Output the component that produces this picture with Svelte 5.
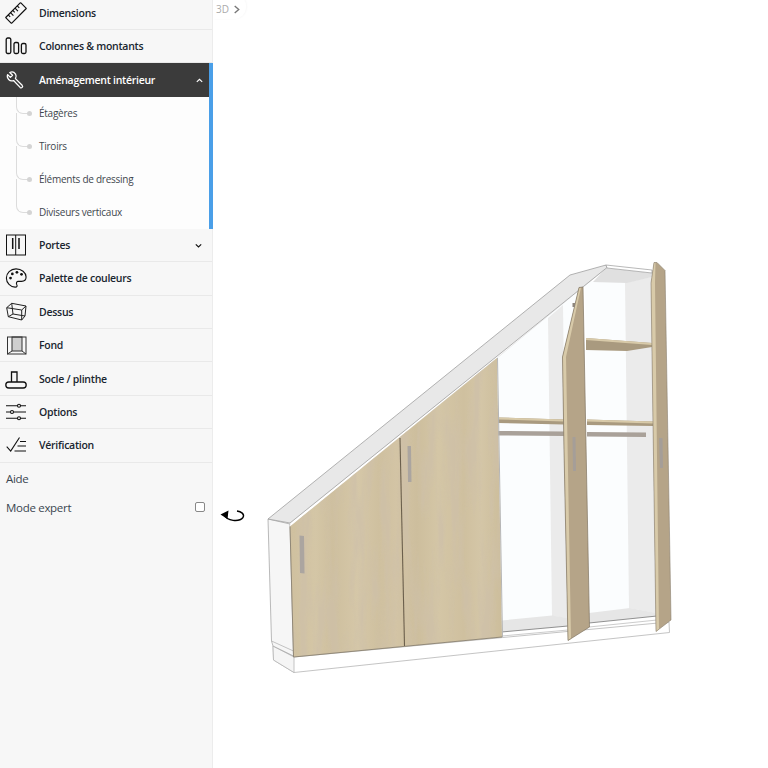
<script>
  const subs = ['Étagères', 'Tiroirs', 'Éléments de dressing', 'Diviseurs verticaux'];
</script>

<div class="page">
  <aside class="side">
    <div class="row">
      <svg class="ico" viewBox="0 0 24 24"><g transform="rotate(-45 12 12)" fill="none" stroke="#111" stroke-width="1.3"><rect x="0.5" y="7.5" width="23" height="9" rx=".5"/><path d="M4.500 7.500v3M8 7.500v4.500M11.500 7.500v3M15 7.500v4.500M18.500 7.500v3"/></g></svg>
      <span>Dimensions</span>
    </div>
    <div class="row">
      <svg class="ico" viewBox="0 0 22 22" fill="none" stroke="#111" stroke-width="1.300"><rect x="1.200" y="3" width="4.600" height="15.500" rx="1.500"/><rect x="9" y="7.500" width="4.600" height="11" rx="1.500"/><rect x="16.400" y="8.500" width="4.600" height="10" rx="1.500"/></svg>
      <span>Colonnes &amp; montants</span>
    </div>
    <div class="group">
      <div class="row active">
        <svg class="ico" viewBox="0 0 24 24" fill="none" stroke="#fff" stroke-width="1.400" stroke-linejoin="round"><path d="M11.500 5.500a5 5 0 0 0-6.300-1.700l3 3-2.300 2.300-3-3a5 5 0 0 0 6.400 6.500l7.200 7.500c1.500 1.400 3.700-.7 2.200-2.300l-7.300-7.300a4.800 4.800 0 0 0 .1-5z"/></svg>
        <span>Aménagement intérieur</span>
        <svg class="chev" viewBox="0 0 10 10"><path d="M2 6.500 5 3.700 8 6.500" fill="none" stroke="#fff" stroke-width="1.300"/></svg>
      </div>
      <ul class="subs">
        {#each subs as s}
          <li>{s}</li>
        {/each}
      </ul>
    </div>
    <div class="row">
      <svg class="ico" viewBox="0 0 22 22" fill="none" stroke="#111"><rect x="1.500" y="1" width="19" height="20" stroke-width="1"/><path d="M10.700 1v20" stroke-width="1"/><path d="M7.700 4v11M14 4v11" stroke-width="1.500"/></svg>
      <span>Portes</span>
      <svg class="chev" viewBox="0 0 10 10"><path d="M2 3.700 5 6.500 8 3.700" fill="none" stroke="#111" stroke-width="1.300"/></svg>
    </div>
    <div class="row">
      <svg class="ico" viewBox="0 0 24 24"><path d="M12 2C6 2 1.500 6.500 1.500 12c0 5.500 4.500 10 9.500 10 2.500 0 2.500-1.800 1.800-3-.8-1.500-.2-3.300 1.700-3.300h3.500c2.800 0 5-1.800 5-4.700C23 6 18 2 12 2z" fill="none" stroke="#111" stroke-width="1.200"/><g fill="#111"><circle cx="6" cy="12" r="1.500"/><circle cx="8" cy="7.500" r="1.500"/><circle cx="13" cy="5.800" r="1.500"/><circle cx="18" cy="8" r="1.500"/></g></svg>
      <span>Palette de couleurs</span>
    </div>
    <div class="row">
      <svg class="ico" viewBox="0 0 22 22" fill="none" stroke="#222" stroke-width="1" stroke-linejoin="round"><path d="M1.700 6.700 6.700 2.300 21 5 20 15 16.700 19 3.300 15.700Z"/><path d="M1.700 6.700 16.700 9 21 5M16.700 9V19M6.700 2.300 8 13 20 15M8 13 3.300 15.700"/></svg>
      <span>Dessus</span>
    </div>
    <div class="row">
      <svg class="ico" viewBox="0 0 22 22" fill="none" stroke="#333" stroke-width="1"><rect x="7" y="3" width="10" height="14" fill="#cfcfcf"/><rect x="2.500" y="3" width="18.500" height="17"/><path d="M2.500 20 7 17M21 20 17 17"/></svg>
      <span>Fond</span>
    </div>
    <div class="row">
      <svg class="ico" viewBox="0 0 22 22" fill="none" stroke="#111" stroke-width="1.300"><path d="M6.500 14V4h5.500v10M3.800 14a3 3 0 0 0 0 6h14.400a3 3 0 0 0 0-6z"/></svg>
      <span>Socle / plinthe</span>
    </div>
    <div class="row">
      <svg class="ico" viewBox="0 0 22 22" fill="none" stroke="#111" stroke-width="1.100"><path d="M1 4.700h11.500M15.500 4.700H21M1 11h4.500M8.500 11H21M1 17.300h11.500M15.500 17.300H21"/><circle cx="14" cy="4.700" r="1.500"/><circle cx="7" cy="11" r="1.500"/><circle cx="14" cy="17.300" r="1.500"/></svg>
      <span>Options</span>
    </div>
    <div class="row">
      <svg class="ico" viewBox="0 0 22 22" fill="none" stroke="#111" stroke-width="1.100"><path d="M1.700 12.700 5.700 17 14.500 3.500"/><path d="M15 7.500h6M12.500 12h8.500M9.500 17h11.500"/></svg>
      <span>Vérification</span>
    </div>
    <div class="plain aide">Aide</div>
    <label class="plain expert">
      <span>Mode expert</span>
      <input type="checkbox" />
    </label>
  </aside>

  <main class="stage">
    <div class="crumb">3D
      <svg viewBox="0 0 10 10"><path d="M3 1 7.500 5 3 9" fill="none" stroke="#777" stroke-width="1.500"/></svg>
    </div>
    <svg class="rotate" viewBox="0 0 26 16" fill="none">
      <path d="M4 7C7 13 19 14.500 23 9.500 25 6 21 3.500 17 3" stroke="#000" stroke-width="1.400"/>
      <path d="M0.500 6.500 8.500 2.500 7.500 11z" fill="#000"/>
    </svg>

    <svg class="model" viewBox="213 0 555 768">
      <defs>
        <linearGradient id="wood" x1="290" x2="502" y1="0" y2="0" gradientUnits="userSpaceOnUse">
          <stop offset="0" stop-color="#cfc09f"/>
          <stop offset=".12" stop-color="#d4c6a6"/>
          <stop offset=".2" stop-color="#cebf9e"/>
          <stop offset=".32" stop-color="#d5c7a8"/>
          <stop offset=".42" stop-color="#cfc09f"/>
          <stop offset=".5" stop-color="#d3c4a5"/>
          <stop offset=".6" stop-color="#cdbe9d"/>
          <stop offset=".7" stop-color="#d4c6a6"/>
          <stop offset=".82" stop-color="#cfc09f"/>
          <stop offset=".9" stop-color="#d4c6a7"/>
          <stop offset="1" stop-color="#ccbd9b"/>
        </linearGradient>
        <filter id="grain" x="0" y="0" width="100%" height="100%">
          <feTurbulence type="fractalNoise" baseFrequency="0.1 0.012" numOctaves="3" seed="5"/>
          <feColorMatrix values="0 0 0 0 0.62  0 0 0 0 0.53  0 0 0 0 0.40  3.500 0 0 0 -1.400"/>
          <feComposite in2="SourceGraphic" operator="in"/>
        </filter>
      </defs>

      <!-- plinth -->
      <polygon points="273,646 294,657 669,622 669.500,632.500 294,672.500 273.500,660" fill="#fff" stroke="#b5b5b5" stroke-width=".8"/>
      <polygon points="273,646 294,657 294,672.500 273.500,660" fill="#f5f5f5" stroke="#b5b5b5" stroke-width=".8"/>
      <!-- left side -->
      <polygon points="268,519 290,524 293.500,656 273,646 271.500,641" fill="#f6f6f6" stroke="#a8a8a8" stroke-width=".8"/>
      <line x1="271.500" y1="641" x2="293.500" y2="651" stroke="#b5b5b5" stroke-width=".8"/>

      <!-- interior backs -->
      <polygon points="497,358 583,287 590,620 502,631" fill="#fbfdfe"/>
      <polygon points="585,282 651,276 657,614 590,622" fill="#fbfdfe"/>
      <polygon points="548,318 563,305 567,618 552,616" fill="#ebebeb"/>
      <polygon points="625,283 651,277 656,613 629,608" fill="#ebebeb"/>
      <polygon points="606,268 652,273 652,277 627,283 593,282" fill="#e0e0e0"/>

      <!-- floors -->
      <polygon points="501.500,620.500 552,615.500 568,618 568,626 501.500,632" fill="#e6e6e6"/>
      <line x1="501.500" y1="632" x2="568" y2="626" stroke="#777" stroke-width=".8"/>
      <polygon points="589,613 630,608 657,613 657,616 589,623" fill="#e6e6e6"/>
      <line x1="589" y1="623" x2="657" y2="616" stroke="#777" stroke-width=".8"/>
      <line x1="502" y1="636" x2="568" y2="630" stroke="#aaa" stroke-width=".6"/>
      <line x1="589" y1="627" x2="657" y2="620" stroke="#aaa" stroke-width=".6"/>

      <!-- shelves -->
      <polygon points="586,338 652,343 652,347 627,351 586,350" fill="#a99a7f"/>
      <polygon points="586,338 652,343 652,345 586,340" fill="#d8caa9"/>
      <polygon points="498,417.500 564,419.500 564,424.500 498,423" fill="#a99a7f"/>
      <polygon points="498,417.500 564,419.500 564,421.500 498,419.500" fill="#d8caa9"/>
      <polygon points="587,419.500 653,421.500 653,426 587,425" fill="#a99a7f"/>
      <polygon points="587,419.500 653,421.500 653,423.500 587,421.500" fill="#d8caa9"/>

      <!-- rods -->
      <polygon points="498,431 564,431.500 564,436 498,435.500" fill="#a9a199"/>
      <polygon points="587,432 646,432.500 646,437 587,436.500" fill="#a9a199"/>

      <!-- top panel -->
      <polygon points="290,523 290,527 497,358 583,287 607,268 606.500,267" fill="#fff" stroke="#ccc" stroke-width=".4"/>
      <polygon points="268,519 570,275 606,265 607,267.500 290,523" fill="#e8e8e8" stroke="#a0a0a0" stroke-width=".8" stroke-linejoin="round"/>
      <polygon points="606,265 652,270 652,273 607,268" fill="#fff" stroke="#999" stroke-width=".7"/>

      <!-- closed doors -->
      <polygon points="290,526.500 497,358 502,637 293.500,657" fill="url(#wood)"/>
      <polygon points="290,526.500 497,358 502,637 293.500,657" filter="url(#grain)" opacity=".6"/>
      <path d="M293.500 657 502 637M290 526.500 293.500 657" stroke="#8a8170" stroke-width=".9" fill="none"/>
      <path d="M497.500 358 502.500 637" stroke="#b5b5b5" stroke-width="1" fill="none"/>
      <line x1="400" y1="438" x2="404.500" y2="646" stroke="#6b5f4c" stroke-width="1.100"/>
      <polygon points="299.500,535.500 304,536 304.500,573.500 300,573" fill="#aba5a0"/>
      <polygon points="407.500,446 411,446 411.500,482 408,482" fill="#aba5a0"/>

      <!-- open door 3 -->
      <polygon points="562.500,357 579,287.500 583,287 589.500,627 568,640.500 564,450" fill="#b5a488"/>
      <polygon points="562.500,357 579,287.500 581,287.500 566,357 571,639 568,640.500 564,450" fill="#d8caa9"/>
      <path d="M562.500 357 579 287.500 583 287 589.500 627 568 640.500 564 450z" fill="none" stroke="#7f7461" stroke-width=".7"/>
      <polygon points="572.500,437 575.500,437 576,471 573,471" fill="#a59e98"/>
      <rect x="572.500" y="303" width="2.500" height="4" fill="#8d857c"/>

      <!-- open door 4 -->
      <polygon points="651,283 654,262.500 657,262.500 665,270.500 671,620 656,631.500" fill="#b5a488"/>
      <polygon points="651,283 654,262.500 655.500,262.500 655,283 659,629.500 656,631.500" fill="#d8caa9"/>
      <path d="M651 283 654 262.500 657 262.500 665 270.500 671 620 656 631.500z" fill="none" stroke="#8a8070" stroke-width=".6"/>
      <polygon points="659,438 662.500,438 663,468 660,468" fill="#a59e98"/>
    </svg>
  </main>
</div>

<style>
  :global(body) {
    margin: 0;
    background: #fff;
  }
  .page {
    display: flex;
    width: 768px;
    height: 768px;
    overflow: hidden;
    font-family: "Open Sans", "Liberation Sans", sans-serif;
  }
  .side {
    width: 212px;
    flex: none;
    height: 772px;
    margin-top: -3.300px;
    background: #f7f7f7;
    border-right: 1px solid #ececec;
  }
  .row {
    display: flex;
    align-items: center;
    height: 32.400px;
    padding: 0 9px 0 5px;
    border-bottom: 1px solid #e9e9e9;
    font-size: 10.500px;
    font-weight: 600;
    letter-spacing: -0.270px;
    color: #1a2630;
  }
  .row span {
    margin-left: 12px;
    flex: 1;
  }
  .ico {
    width: 22px;
    height: 22px;
    flex: none;
  }
  .chev {
    width: 9px;
    height: 9px;
    flex: none;
  }
  .group {
    border-right: 4px solid #4a9fe8;
    margin-right: -1px;
  }
  .active {
    background: #3b3b3b;
    color: #fff;
    border-bottom: none;
    height: 33.400px;
    padding-right: 5px;
  }
  .subs {
    list-style: none;
    margin: 0;
    padding: 0;
    background: #fdfdfd;
  }
  .subs li {
    position: relative;
    height: 33px;
    line-height: 33px;
    padding-left: 39px;
    font-size: 10px;
    font-weight: 500;
    letter-spacing: -0.250px;
    color: #3f474e;
  }
  .subs li::before {
    content: "";
    position: absolute;
    left: 16px;
    top: -17px;
    width: 12px;
    height: 33px;
    border-left: 1px solid #dcdcdc;
    border-bottom: 1px solid #dcdcdc;
    border-bottom-left-radius: 7px;
  }
  .subs li:first-child::before {
    top: 0;
    height: 16px;
  }
  .subs li::after {
    content: "";
    position: absolute;
    left: 27px;
    top: 14px;
    width: 5px;
    height: 5px;
    border-radius: 50%;
    background: #d4d4d4;
  }
  .plain {
    display: flex;
    align-items: center;
    padding: 0 7px 0 6px;
    font-size: 11.500px;
    letter-spacing: -0.300px;
    color: #3a4650;
  }
  .aide {
    height: 32.500px;
  }
  .expert {
    height: 25.500px;
    justify-content: space-between;
  }
  .expert input {
    appearance: none;
    width: 10px;
    height: 10px;
    margin: 0 0 2px 0;
    border: 1px solid #888;
    border-radius: 2px;
    background: #fff;
  }
  .stage {
    position: relative;
    flex: 1;
    height: 768px;
  }
  .crumb {
    position: absolute;
    left: 0;
    top: -6px;
    display: flex;
    align-items: center;
    gap: 3px;
    height: 25px;
    padding: 5px 5px 0 3px;
    box-sizing: border-box;
    font-size: 10px;
    color: #aaa;
    background: #fff;
    border-radius: 0 12px 12px 0;
    box-shadow: 1px 0 2px rgba(0, 0, 0, .03);
  }
  .crumb svg {
    width: 9px;
    height: 9px;
  }
  .rotate {
    position: absolute;
    left: 7px;
    top: 508px;
    width: 26px;
    height: 16px;
  }
  .model {
    position: absolute;
    left: 0;
    top: 0;
    width: 555px;
    height: 768px;
  }
</style>
